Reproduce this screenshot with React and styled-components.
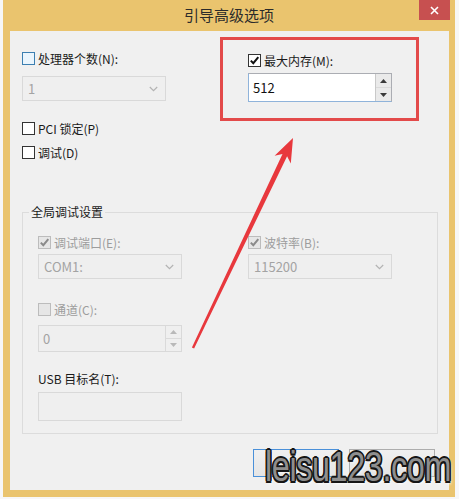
import React from "react";
import styled, { createGlobalStyle } from "styled-components";

const GlobalStyle = createGlobalStyle`
  html, body {
    margin: 0;
    padding: 0;
    background: #f7f7f7;
  }
  * {
    box-sizing: border-box;
  }
`;

const FONT = `"Noto Sans CJK SC", "Noto Sans", sans-serif`;

const Page = styled.div`
  position: relative;
  width: 459px;
  height: 499px;
  overflow: hidden;
  font-family: ${FONT};
  font-size: 12px;
  color: #1a1a1a;
`;

const Window = styled.div`
  margin-left: 3px;
  width: 452px;
  height: 497px;
  background: #eac46e;
  display: flex;
  flex-direction: column;
  padding: 0 6px 7px 7px;
`;

const TitleBar = styled.div`
  height: 31px;
  margin: 0 -6px 0 -7px;
  display: grid;
  grid-template-columns: 1fr auto 1fr;
  align-items: start;
`;

const Title = styled.div`
  grid-column: 2;
  font-size: 15px;
  line-height: 30px;
  color: #2b2b2b;
`;

const CloseButton = styled.div`
  grid-column: 3;
  justify-self: end;
  margin-right: 5px;
  width: 31px;
  height: 20px;
  background: #c75050;
  display: flex;
  align-items: center;
  justify-content: center;
`;

const Content = styled.div`
  flex: 1;
  background: #f0f0f0;
  padding: 6px 0 0 12px;
  display: flex;
  flex-direction: column;
`;

const TopGrid = styled.div`
  display: grid;
  grid-template-columns: 198px 199px;
  align-items: start;
`;

const LeftCol = styled.div`
  display: flex;
  flex-direction: column;
  padding-top: 11px;
`;

const RedBox = styled.div`
  height: 84px;
  border: 3px solid #e34a4a;
  padding: 10px 0 0 25px;
  display: flex;
  flex-direction: column;
`;

const CheckRow = styled.label`
  display: flex;
  align-items: center;
  gap: 3px;
  height: 20px;
  margin-top: ${(p) => p.$mt || 0}px;
  color: ${(p) => (p.$disabled ? "#9d9d9d" : "#1a1a1a")};
  white-space: nowrap;
`;

const Label = styled.div`
  display: flex;
  align-items: center;
  height: 20px;
  margin-top: ${(p) => p.$mt || 0}px;
  color: #1a1a1a;
`;

const Box = styled.span`
  width: 13px;
  height: 13px;
  flex: none;
  display: flex;
  align-items: center;
  justify-content: center;
  border: 1px solid
    ${(p) => (p.$hover ? "#3c7fb1" : p.$disabled ? "#bcbcbc" : "#333333")};
  background: ${(p) =>
    p.$hover ? "#eaf5fd" : p.$disabled ? "#e6e6e6" : "#ffffff"};
`;

const Combo = styled.div`
  width: 144px;
  height: 25px;
  margin-top: ${(p) => p.$mt || 0}px;
  border: 1px solid #d9d9d9;
  background: #efefef;
  display: flex;
  align-items: center;
  justify-content: space-between;
  padding: 0 7px 0 5px;
  font-size: 13px;
  color: #a3a3a3;
`;

const Spin = styled.div`
  width: 144px;
  height: ${(p) => p.$h}px;
  margin-top: ${(p) => p.$mt || 0}px;
  display: flex;
  border: 1px solid;
  border-color: ${(p) =>
    p.$disabled ? "#d9d9d9" : "#abadb3 #abadb3 #8fb3da #8fb3da"};
  background: ${(p) => (p.$disabled ? "#efefef" : "#ffffff")};
  font-size: 13px;
  color: ${(p) => (p.$disabled ? "#a3a3a3" : "#111111")};
`;

const SpinValue = styled.div`
  flex: 1;
  display: flex;
  align-items: center;
  padding-left: 4px;
`;

const SpinButtons = styled.div`
  width: 16px;
  display: flex;
  flex-direction: column;
  border-left: 1px solid ${(p) => (p.$disabled ? "#dadada" : "#c9c9c9")};
`;

const SpinButton = styled.div`
  flex: 1;
  display: flex;
  align-items: center;
  justify-content: center;
  background: ${(p) => (p.$disabled ? "#efefef" : "#eaeaea")};
  & + & {
    border-top: 1px solid ${(p) => (p.$disabled ? "#dadada" : "#c9c9c9")};
  }
`;

const TextBox = styled.div`
  width: 144px;
  height: 29px;
  margin-top: 4px;
  border: 1px solid #d9d9d9;
  background: #efefef;
`;

const Group = styled.fieldset`
  width: 416px;
  margin: 42px 0 0 0;
  padding: 0;
  min-inline-size: 0;
  border: 1px solid #dcdcdc;
`;

const Legend = styled.legend`
  margin-left: 6px;
  padding: 0 2px;
  font-size: 12px;
  line-height: 16px;
  color: #1a1a1a;
`;

const GroupBody = styled.div`
  padding: 12px 0 12px 15px;
  display: flex;
  flex-direction: column;
`;

const PairRow = styled.div`
  display: grid;
  grid-template-columns: 144px 144px;
  column-gap: 66px;
`;

const Field = styled.div`
  display: flex;
  flex-direction: column;
`;

const ButtonRow = styled.div`
  display: flex;
  justify-content: flex-end;
  gap: 10px;
  margin-top: 15px;
  padding-right: 14px;
`;

/* the labels of these two buttons are hidden under the watermark */
const Button = styled.div`
  width: 86px;
  height: 28px;
  border: 1px solid ${(p) => (p.$primary ? "#4a90d9" : "#adadad")};
  background: linear-gradient(#f0f0f0, #e5e5e5);
`;

const Watermark = styled.div`
  position: absolute;
  left: 265px;
  top: 446px;
  font-family: "Liberation Sans", Arial, sans-serif;
  font-size: 42px;
  line-height: 42px;
  letter-spacing: -0.5px;
  color: #8e8e8e;
  transform: scaleX(0.77);
  transform-origin: left top;
  white-space: nowrap;
  text-shadow: -2px 0 #161616, 2px 0 #161616, 0 -2px #161616, 0 2px #161616,
    -1.5px -1.5px #161616, 1.5px -1.5px #161616, -1.5px 1.5px #161616,
    1.5px 1.5px #161616, 2px 3px 3px rgba(255, 255, 255, 0.9);
  pointer-events: none;
`;

const Overlay = styled.svg`
  position: absolute;
  left: 0;
  top: 0;
  pointer-events: none;
`;

const Check = ({ checked, disabled, hover }) => (
  <Box $disabled={disabled} $hover={hover}>
    {checked && (
      <svg width="11" height="11" viewBox="0 0 11 11">
        <path
          d="M1.8 5.6 L4.3 8.2 L9.3 2.2"
          fill="none"
          stroke={disabled ? "#8a8a8a" : "#111"}
          strokeWidth="2"
        />
      </svg>
    )}
  </Box>
);

const Chevron = () => (
  <svg width="9" height="6" viewBox="0 0 9 6">
    <path d="M0.8 1 L4.5 4.6 L8.2 1" fill="none" stroke="#b3b3b3" strokeWidth="1.2" />
  </svg>
);

const Tri = ({ up, color }) => (
  <svg width="7" height="4" viewBox="0 0 7 4">
    <path d={up ? "M0 4 L3.5 0 L7 4 Z" : "M0 0 L7 0 L3.5 4 Z"} fill={color} />
  </svg>
);

const SpinBox = ({ value, disabled, height, mt }) => {
  const c = disabled ? "#b9b9b9" : "#3a3a3a";
  return (
    <Spin $disabled={disabled} $h={height} $mt={mt}>
      <SpinValue>{value}</SpinValue>
      <SpinButtons $disabled={disabled}>
        <SpinButton $disabled={disabled}>
          <Tri up color={c} />
        </SpinButton>
        <SpinButton $disabled={disabled}>
          <Tri color={c} />
        </SpinButton>
      </SpinButtons>
    </Spin>
  );
};

export default function App() {
  return (
    <Page>
      <GlobalStyle />
      <Window>
        <TitleBar>
          <Title>引导高级选项</Title>
          <CloseButton>
            <svg width="9" height="9" viewBox="0 0 9 9">
              <path d="M1 1 L8 8 M8 1 L1 8" stroke="#fff" strokeWidth="1.6" />
            </svg>
          </CloseButton>
        </TitleBar>
        <Content>
          <TopGrid>
            <LeftCol>
              <CheckRow>
                <Check hover />
                处理器个数(N):
              </CheckRow>
              <Combo $mt={8}>
                1
                <Chevron />
              </Combo>
              <CheckRow $mt={17}>
                <Check />
                PCI 锁定(P)
              </CheckRow>
              <CheckRow $mt={4}>
                <Check />
                调试(D)
              </CheckRow>
            </LeftCol>
            <RedBox>
              <CheckRow>
                <Check checked />
                最大内存(M):
              </CheckRow>
              <SpinBox value="512" height={29} mt={3} />
            </RedBox>
          </TopGrid>

          <Group>
            <Legend>全局调试设置</Legend>
            <GroupBody>
              <PairRow>
                <Field>
                  <CheckRow $disabled>
                    <Check checked disabled />
                    调试端口(E):
                  </CheckRow>
                  <Combo $mt={2}>
                    COM1:
                    <Chevron />
                  </Combo>
                </Field>
                <Field>
                  <CheckRow $disabled>
                    <Check checked disabled />
                    波特率(B):
                  </CheckRow>
                  <Combo $mt={2}>
                    115200
                    <Chevron />
                  </Combo>
                </Field>
              </PairRow>
              <CheckRow $disabled $mt={20}>
                <Check disabled />
                通道(C):
              </CheckRow>
              <SpinBox value="0" disabled height={27} mt={6} />
              <Label $mt={16}>USB 目标名(T):</Label>
              <TextBox />
            </GroupBody>
          </Group>

          <ButtonRow>
            <Button $primary />
            <Button />
          </ButtonRow>
        </Content>
      </Window>

      <Overlay width="459" height="499" viewBox="0 0 459 499">
        <polygon
          points="293,138 290.8,163.6 287.1,156.3 194.1,348.5 191.9,347.5 282.5,154.1 274.6,155.8"
          fill="#e8383d"
        />
      </Overlay>
      <Watermark>leisu123.com</Watermark>
    </Page>
  );
}
